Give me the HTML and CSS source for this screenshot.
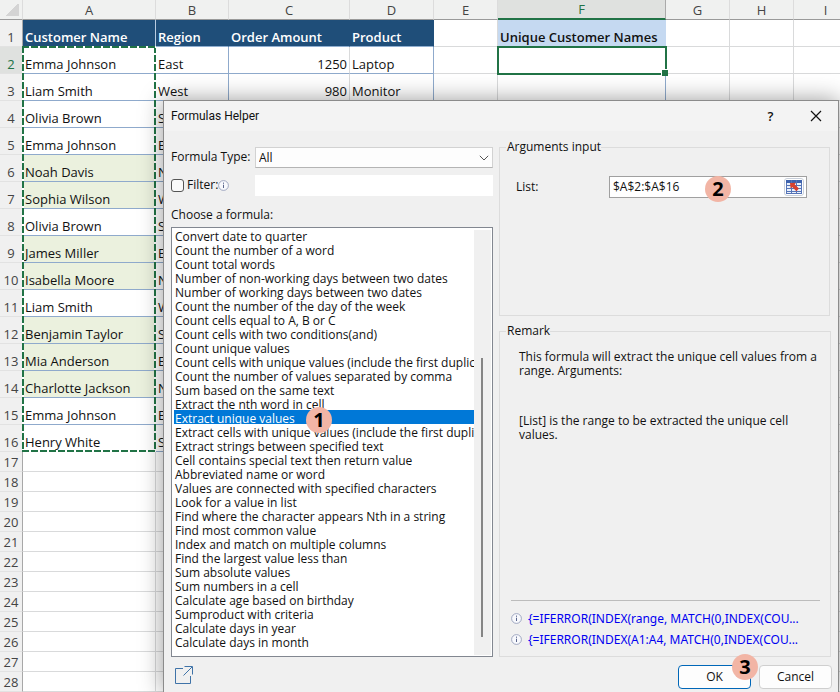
FILE: index.html
```html
<!DOCTYPE html>
<html lang="en">
<head>
<meta charset="utf-8">
<title>Formulas Helper</title>
<link rel="stylesheet" href="styles.css">
</head>
<body>
<main class="sheet">
<table class="grid">
<colgroup><col class="c-num"><col class="c-a"><col class="c-b"><col class="c-c"><col class="c-d"><col class="c-e"><col class="c-f"><col class="c-g"><col class="c-g"><col></colgroup>
<thead><tr><th class="corner"></th><th>A</th><th>B</th><th>C</th><th>D</th><th>E</th><th class="on">F</th><th>G</th><th>H</th><th>I</th></tr></thead>
<tbody id="rows"></tbody>
</table>
<div class="ants"></div>
</main>

<section class="dialog" role="dialog" aria-labelledby="dlg-title">
  <header class="titlebar">
    <h1 id="dlg-title">Formulas Helper</h1>
    <button class="tool" type="button" aria-label="Help"><span class="q">?</span></button>
    <button class="tool" type="button" aria-label="Close"><svg width="12" height="12" viewBox="0 0 12 12"><path d="M1 1l10 10M11 1L1 11" stroke="#111" stroke-width="1.2" fill="none"/></svg></button>
  </header>
  <div class="body">
    <div class="left">
      <div class="field"><label for="type">Formula Type:</label>
        <div class="combo"><select id="type"><option>All</option></select><svg width="10" height="6" viewBox="0 0 10 6"><path d="M.8.8L5 5 9.200.8" stroke="#555" fill="none"/></svg></div></div>
      <div class="field"><span class="check"><input type="checkbox" id="filter"><label for="filter">Filter:</label><svg class="info" width="11" height="11" viewBox="0 0 11 11"><circle cx="5.500" cy="5.500" r="4.900" fill="#f8f9fd" stroke="#8d97b5" stroke-width=".8"/><path d="M5.500 4.700v3.300M5.500 2.600v1.200" stroke="#5a668c"/></svg></span>
        <input class="filter-text" type="text" aria-label="Filter text"></div>
      <label class="choose" for="formulas">Choose a formula:</label>
      <div class="listbox">
        <select id="formulas" size="30"></select>
        <div class="track"><div class="thumb"></div></div>
        <span class="badge badge-1">1</span>
      </div>
    </div>
    <div class="right">
      <fieldset class="args"><legend>Arguments input</legend>
        <div class="arg"><label for="list">List:</label>
          <div class="ref"><input id="list" type="text" value="$A$2:$A$16"><button type="button" aria-label="Select range"><svg width="16" height="14" viewBox="0 0 16 14"><path d="M0 0h16v14H0z" fill="#e9f0fa"/><path d="M0 0h16v3H0z" fill="#3d62ad"/><path d="M0 5.500h16M0 8.500h16M0 11.500h16M.5 3v11M5.500 0v14M10.500 0v14M15.500 3v11M0 13.500h16" stroke="#5574b8" stroke-width="1"/><path d="M4 3l6-.2-1.300 1.600 4.300 4.100-2.600 2.700-4.200-4.300L4.600 8.500z" fill="#d8412e"/></svg></button><span class="badge badge-2">2</span></div></div>
      </fieldset>
      <fieldset class="remark"><legend>Remark</legend>
        <p>This formula will extract the unique cell values from a range. Arguments:</p>
        <p>[List] is the range to be extracted the unique cell values.</p>
        <div class="examples">
          <div><svg class="info" width="11" height="11" viewBox="0 0 11 11"><circle cx="5.500" cy="5.500" r="4.900" fill="#f8f9fd" stroke="#8d97b5" stroke-width=".8"/><path d="M5.500 4.700v3.300M5.500 2.600v1.200" stroke="#5a668c"/></svg><a href="#">{=IFERROR(INDEX(range, MATCH(0,INDEX(COU...</a></div>
          <div><svg class="info" width="11" height="11" viewBox="0 0 11 11"><circle cx="5.500" cy="5.500" r="4.900" fill="#f8f9fd" stroke="#8d97b5" stroke-width=".8"/><path d="M5.500 4.700v3.300M5.500 2.600v1.200" stroke="#5a668c"/></svg><a href="#">{=IFERROR(INDEX(A1:A4, MATCH(0,INDEX(COU...</a></div>
        </div>
      </fieldset>
    </div>
  </div>
  <footer class="footer">
    <a class="open" href="#" aria-label="Open"><svg width="18" height="18" viewBox="0 0 18 18"><path d="M8 2.500H.5v15h15V10M8.500 9.500l8.500-8.500M9.500 .5h8v8" stroke="#3f73a8" fill="none"/></svg></a>
    <div class="ok-wrap"><button class="btn ok" type="button">OK</button><span class="badge badge-3">3</span></div>
    <button class="btn" type="button">Cancel</button>
  </footer>
</section>
<script src="app.js"></script>
</body>
</html>
```
FILE: styles.css
```css
* { box-sizing: border-box; }
html, body { height: 100%; margin: 0; overflow: hidden; }
body { position: relative; background: #fff; color: #111; font: 12px/14px "Open Sans", sans-serif; }
button, input, select { font: inherit; color: inherit; }

.sheet { position: relative; overflow: hidden; font-size: 13px; line-height: 18px; }
.grid { width: max(100%, 858px); table-layout: fixed; border-collapse: separate; border-spacing: 0; }
.c-num { width: 23px; } .c-a { width: 133px; } .c-b { width: 73px; } .c-c { width: 121px; }
.c-d { width: 84px; } .c-e { width: 64px; } .c-f { width: 168px; } .c-g { width: 64px; }
.grid th, .grid td { padding: 0 2px; overflow: hidden; white-space: nowrap; text-align: left; vertical-align: bottom; border-right: 1px solid #d9dadb; border-bottom: 1px solid #d9dadb; }
.grid thead th { height: 20px; padding: 0; background: #f0f1f0; color: #444; font-weight: 400; text-align: center; vertical-align: middle; border-bottom-color: #9a9a9a; border-right-color: #dcdcdc; }
.grid thead th.on { background: #dfe1df; color: #217346; border-bottom: 2px solid #217346; border-right-color: #aaa; }
.grid thead .corner { background: linear-gradient(135deg, transparent 50%, #d4d4d4 50%) 4px 4px / 15px 12px no-repeat #f0f1f0; }
.grid tbody th { height: 20px; padding: 0; background: #f0f0f0; color: #444; font-weight: 400; text-align: center; border-right-color: #a8a8a8; border-bottom-color: #e2e2e2; }
.grid tr.tall > * { height: 27px; }
.grid tbody th.on { background: #dfe1df; color: #217346; }
.grid td.head { background: #1f4e79; color: #fff; font-weight: 600; border-right-color: #1f4e79; border-bottom-color: #8faed0; }
.grid td.head:nth-child(2) { border-right-color: #b9cbe0; }
.grid td.data { border-color: #8faacc; }
.grid td.soft { border-right-color: #d9dadb; }
.grid td.green { background: #ebf1de; }
.grid td.num { text-align: right; }
.grid td.unique { background: #c5d9f1; font-weight: 600; border-right-color: #c5d9f1; }
.grid td.target { position: relative; overflow: visible; outline: 2px solid #217346; outline-offset: -1px; }
.grid td.target::after { content: ""; position: absolute; right: -3px; bottom: -3px; width: 6px; height: 6px; background: #217346; border: solid #fff; border-width: 1px 0 0 1px; }
.ants { position: absolute; left: 22px; top: 46px; width: 134px; height: 406px;
  background:
    repeating-linear-gradient(90deg, #217346 0 7px, #fff 7px 9px) 0 0 / 100% 2px no-repeat,
    repeating-linear-gradient(90deg, #217346 0 7px, #fff 7px 9px) 0 100% / 100% 2px no-repeat,
    repeating-linear-gradient(#217346 0 7px, #fff 7px 9px) 0 0 / 2px 100% no-repeat,
    repeating-linear-gradient(#217346 0 7px, #fff 7px 9px) 100% 0 / 2px 100% no-repeat; }

.dialog { position: absolute; left: 163px; right: 1px; top: 100px; bottom: 0; display: flex; flex-direction: column; background: #f0f0f0; border: 1px solid #8b8b8b; border-bottom: 0; box-shadow: 0 0 22px rgba(0, 0, 0, .4); }
.titlebar { display: flex; align-items: center; height: 30px; padding-left: 7px; background: #f3f3f3; }
.titlebar h1 { flex: 1; margin: 0; font: inherit; font-family: Roboto, sans-serif; }
.tool { width: 45px; height: 28px; padding: 0; border: 0; background: none; }
.tool svg { display: block; margin: 0 auto; }
.q { font-size: 13px; font-weight: 600; }
.body { flex: 1; display: grid; grid-template-columns: 322px minmax(0, 1fr); gap: 6px; padding: 0 7px; min-height: 0; }
.left { display: flex; flex-direction: column; padding-top: 16px; }
.field { display: flex; height: 28px; }
.field > label, .check { width: 84px; height: 20px; display: flex; align-items: center; flex: none; white-space: nowrap; }
.check input { appearance: none; width: 13px; height: 13px; margin: 0 3px 0 0; border: 1px solid #555; border-radius: 3px; background: #fafafa; }
.combo { position: relative; flex: 1; height: 21px; }
.combo select { appearance: none; width: 100%; height: 100%; padding: 0 3px; border: 1px solid #d2d2d2; border-bottom-color: #b4b4b4; border-radius: 0; background: #fdfdfd; }
.combo svg { position: absolute; right: 4px; top: 8px; }
.filter-text { flex: 1; min-width: 0; height: 21px; padding: 0 4px; border: 0; background: #fff; }
.choose { height: 24px; padding-top: 5px; }
.listbox { position: relative; flex: 1; display: flex; min-height: 0; background: #fff; border: 1px solid #828790; padding: 0 1px 1px 2px; }
.listbox select { flex: 1; min-width: 0; height: 100%; padding: 0; margin: 0; border: 0; border-radius: 0; outline: 0; background: #fff; overflow: hidden; }
.listbox option { min-height: 14px; height: 14px; padding: 0 1px; line-height: 14px; overflow: visible; white-space: nowrap; }
.listbox option:checked { background: #0078d7 linear-gradient(#0078d7, #0078d7); color: #fff !important; }
.track { width: 17px; margin-top: 2px; background: #f0f0f0; padding: 128px 7px 18px; }
.thumb { width: 2px; height: 100%; background: #858585; }
.right { display: flex; flex-direction: column; gap: 8px; padding-top: 9px; }
fieldset { margin: 0; border: 1px solid #dcdcdc; min-width: 0; padding: 0 11px 0 19px; }
legend { padding: 0 0 0 1px; margin-left: -13px; line-height: 14px; }
.args { height: 176px; margin-right: 1px; padding-left: 16px; padding-right: 22px; }
.args legend { margin-left: -10px; }
.arg { display: flex; align-items: center; padding-top: 22px; }
.arg > label { width: 93px; }
.ref { position: relative; flex: 1; display: flex; align-items: center; height: 22px; border: 1px solid #a0a0a0; background: #fff; padding-right: 2px; }
.ref input { flex: 1; min-width: 0; border: 0; padding: 0 3px; background: none; outline: 0; }
.ref button { width: 20px; height: 18px; padding: 1px; border: 1px solid #c8cfda; border-radius: 3px; background: #fff; }
.ref button svg { display: block; }
.remark { flex: 1; display: flex; flex-direction: column; }
.remark p { margin: 0; padding-top: 12px; height: 64px; }
.examples { margin: auto -1px 6px -8px; border-top: 1px solid #bcbcbc; padding-top: 7px; font-family: "Noto Sans", sans-serif; }
.examples div { display: flex; align-items: center; gap: 6px; height: 21px; white-space: nowrap; }
.examples a { color: #0000f0; text-decoration: none; }
.info { flex: none; }
.footer { display: flex; gap: 8px; height: 35px; padding: 8px 6px 3px 11px; }
.open { margin-right: auto; padding-top: 1px; }
.ok-wrap { position: relative; display: flex; }
.btn { width: 73px; height: 24px; padding: 0; border: 1px solid #cfcfcf; border-radius: 4px; background: #fdfdfd; }
.btn.ok { border-color: #0067b8; }
.badge { position: absolute; width: 26px; height: 26px; border-radius: 50%; background: #f2b5a5; color: #000; font: 700 20px/26px "Open Sans", sans-serif; text-align: center; }
.badge-1 { left: 134px; top: 179px; }
.badge-2 { left: 95px; top: -1px; }
.badge-3 { right: -7px; top: -11px; }
```
FILE: app.js
```js
const people = [
  ["Emma Johnson", "East", "1250", "Laptop"], ["Liam Smith", "West", "980", "Monitor"],
  ["Olivia Brown", "S"], ["Emma Johnson", "E"], ["Noah Davis", "N"],
  ["Sophia Wilson", "W"], ["Olivia Brown", "S"], ["James Miller", "E"],
  ["Isabella Moore", "N"], ["Liam Smith", "W"], ["Benjamin Taylor", "S"],
  ["Mia Anderson", "E"], ["Charlotte Jackson", "N"], ["Emma Johnson", "E"],
  ["Henry White", "S"]
];
const green = [6, 7, 9, 10, 12, 13, 14];
let html = `<tr class="tall"><th>1</th><td class="head">Customer Name</td><td class="head">Region</td><td class="head">Order Amount</td><td class="head">Product</td><td></td><td class="unique">Unique Customer Names</td><td></td><td></td><td></td></tr>`;
for (let n = 2; n <= 28; n++) {
  const p = people[n - 2];
  if (p) {
    const a = green.includes(n) ? " green" : "";
    html += `<tr class="tall"><th class="${n === 2 ? "on" : ""}">${n}</th><td class="data${a}">${p[0]}</td><td class="data">${p[1]}</td><td class="data num soft">${p[2] || ""}</td><td class="data">${p[3] || ""}</td><td></td><td class="data${n === 2 ? " target" : ""}"></td><td></td><td></td><td></td></tr>`;
  } else {
    html += `<tr><th>${n}</th>${"<td></td>".repeat(9)}</tr>`;
  }
}
document.getElementById("rows").innerHTML = html;

const formulas = ["Convert date to quarter", "Count the number of a word", "Count total words",
  "Number of non-working days between two dates", "Number of working days between two dates",
  "Count the number of the day of the week", "Count cells equal to A, B or C",
  "Count cells with two conditions(and)", "Count unique values",
  "Count cells with unique values (include the first duplicate)",
  "Count the number of values separated by comma", "Sum based on the same text",
  "Extract the nth word in cell", "Extract unique values",
  "Extract cells with unique values (include the first duplicate)",
  "Extract strings between specified text", "Cell contains special text then return value",
  "Abbreviated name or word", "Values are connected with specified characters",
  "Look for a value in list", "Find where the character appears Nth in a string",
  "Find most common value", "Index and match on multiple columns",
  "Find the largest value less than", "Sum absolute values", "Sum numbers in a cell",
  "Calculate age based on birthday", "Sumproduct with criteria", "Calculate days in year",
  "Calculate days in month"];
const list = document.getElementById("formulas");
for (const f of formulas) list.add(new Option(f, f, f === "Extract unique values", f === "Extract unique values"));
```
